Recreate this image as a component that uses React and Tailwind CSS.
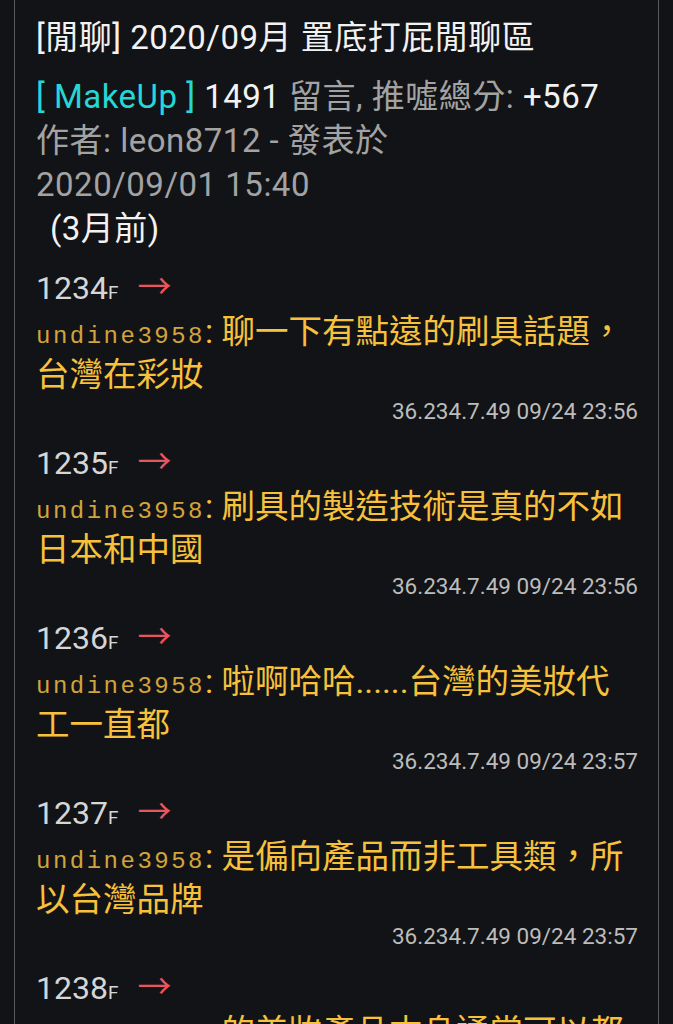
import React from "react";

const comments = [
  { floor: "1234", user: "undine3958", lines: ["聊一下有點遠的刷具話題，", "台灣在彩妝"], ip: "36.234.7.49 09/24 23:56" },
  { floor: "1235", user: "undine3958", lines: ["刷具的製造技術是真的不如", "日本和中國"], ip: "36.234.7.49 09/24 23:56" },
  { floor: "1236", user: "undine3958", lines: ["啦啊哈哈......台灣的美妝代", "工一直都"], ip: "36.234.7.49 09/24 23:57" },
  { floor: "1237", user: "undine3958", lines: ["是偏向產品而非工具類，所", "以台灣品牌"], ip: "36.234.7.49 09/24 23:57" },
  { floor: "1238", user: "undine3958", lines: ["的美妝產品本身通常可以都", ""], ip: "36.234.7.49 09/24 23:58" },
];

const sans = "font-['Roboto','Noto_Sans_CJK_TC',sans-serif]";

function Comment({ c }) {
  return (
    <div className="mb-[15px]">
      <div className="h-[43px] leading-[43px] text-[32px] text-[#d6d6d6] whitespace-nowrap">
        <span className="leading-none">{c.floor}</span>
        <span className="leading-none text-[19px]">F</span>
        <span className="leading-none text-[34px] text-[#e8555f] ml-[19px] font-['Noto_Sans_CJK_TC',sans-serif]">
          →
        </span>
      </div>
      <div className="text-[33.5px] leading-[43px] text-[#f7c13c]">
        <div className="h-[43px] whitespace-nowrap">
          <span className="leading-none font-['Liberation_Mono',monospace] text-[24px] tracking-[2.5px] text-[#d2a43c]">
            {c.user}
          </span>
          <span className="leading-none">: </span>
          {c.lines[0]}
        </div>
        <div className="h-[43px] whitespace-nowrap">{c.lines[1]}</div>
      </div>
      <div className="text-right text-[22.5px] leading-[31px] text-[#bcbcbc]">{c.ip}</div>
    </div>
  );
}

export default function App() {
  return (
    <div className={`h-[1024px] overflow-hidden bg-[#121316] ${sans}`}>
      <div className="mx-[14px] h-full border-x border-[#5a5a5c] pl-[21px] pr-[20px] pt-[16px]">
        <div className="tracking-[0.5px]">
          <h1 className="text-[33px] leading-[44px] text-[#f2f2f2] font-normal">
            [閒聊] 2020/09月 置底打屁閒聊區
          </h1>
          <div className="mt-[15px] text-[33px] leading-[44px] text-[#a3a3a3]">
            <div>
              <span className="text-[#27d6d6]">[ MakeUp ]</span>{" "}
              <span className="text-[#f2f2f2]">1491</span> 留言, 推噓總分:{" "}
              <span className="text-[#f2f2f2]">+567</span>
            </div>
            <div>作者: leon8712 - 發表於</div>
            <div>2020/09/01 15:40</div>
            <div className="text-[#f2f2f2] pl-[14px]">(3月前)</div>
          </div>
        </div>
        <div className="mt-[16px]">
          {comments.map((c) => (
            <Comment key={c.floor} c={c} />
          ))}
        </div>
      </div>
    </div>
  );
}
